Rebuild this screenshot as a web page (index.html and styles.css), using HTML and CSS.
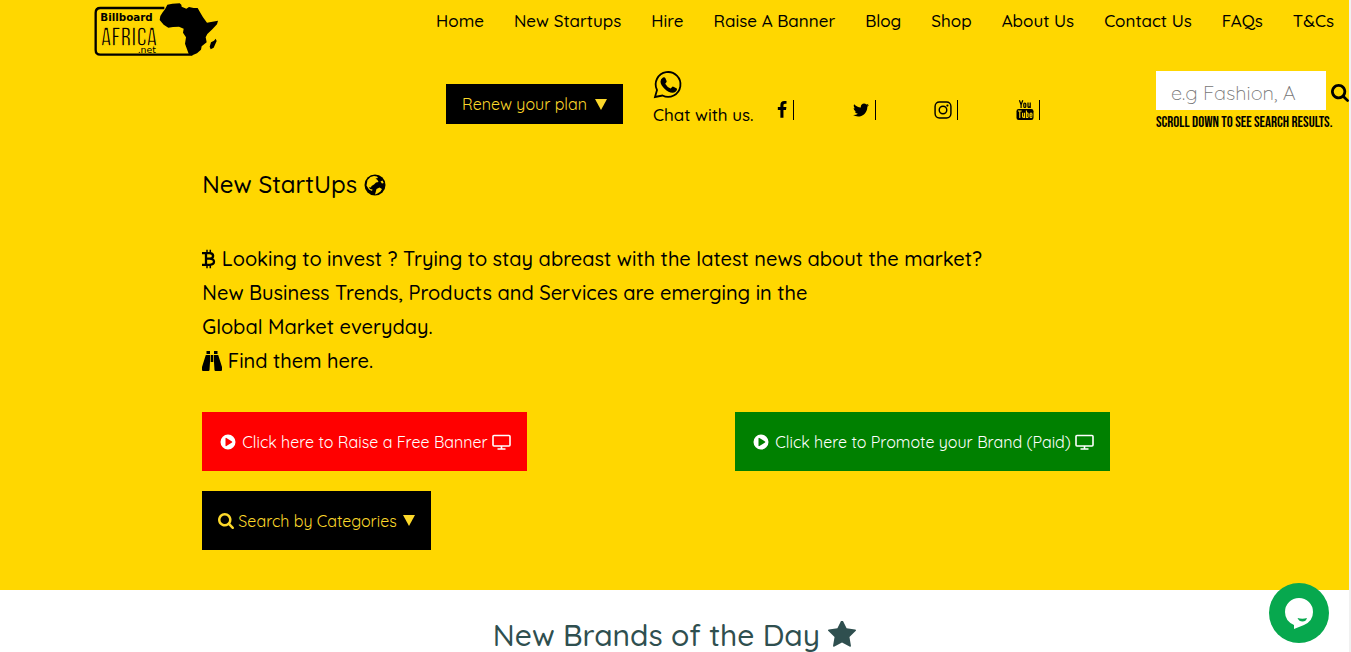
FILE: index.html
```html
<!DOCTYPE html>
<html lang="en">
<head>
<meta charset="utf-8">
<meta name="viewport" content="width=device-width, initial-scale=1">
<title>Billboard Africa - New StartUps</title>
<link rel="stylesheet" href="styles.css">
</head>
<body>
<svg class="sprite" aria-hidden="true">
  <symbol id="i-search" viewBox="64 128 1664 1664"><path d="M1216 832q0-185-131.500-316.500t-316.500-131.500-316.500 131.500-131.500 316.500 131.500 316.500 316.500 131.500 316.500-131.500 131.500-316.500zm512 832q0 52-38 90t-90 38q-54 0-90-38l-343-342q-179 124-399 124-143 0-273.500-55.500t-225-150-150-225-55.500-273.500 55.500-273.500 150-225 225-150 273.500-55.500 273.500 55.500 225 150 150 225 55.500 273.500q0 220-124 399l343 343q37 37 37 90z"/></symbol>
  <symbol id="i-play" viewBox="0 0 16 16"><path fill-rule="evenodd" d="M8 .5a7.500 7.500 0 1 0 0 15 7.500 7.500 0 0 0 0-15zM5.500 4.300v7.400q.1.700.9.400l5.600-3.500q.6-.6 0-1.200L6.400 3.900q-.8-.3-.9.400z"/></symbol>
  <symbol id="i-screen" viewBox="0 0 19 16"><path fill="none" stroke="currentColor" stroke-width="1.600" d="M2 1.500h15a1 1 0 0 1 1 1v8.500a1 1 0 0 1-1 1H2a1 1 0 0 1-1-1V2.500a1 1 0 0 1 1-1zM9.500 12v3M5.500 15h8"/></symbol>
</svg>

<header class="header">
  <a class="logo" href="#" aria-label="Billboard Africa">
    <svg viewBox="24 0 378 174">
      <path fill="none" stroke="#000" stroke-width="7" d="M238 24H46Q32 24 32 38V150Q32 164 46 164H322"/>
      <text class="logo-thin" x="47" y="137" font-size="80">AFRICA</text>
      <text class="logo-bold" x="46" y="62" font-size="31">Billboard</text>
      <text class="logo-net" x="158" y="159" font-size="28">.net</text>
      <path d="M232 38 240 28 247 14 262 11 284 10 289 14 290 20 304 26 312 21 326 24 338 24 346 38 354 52 366 68 378 66 399 62 396 73 382 88 367 102 362 112 365 127 350 139 348 149 336 160 322 166 312 164 306 148 300 131 303 112 294 98 296 86 282 80 264 81 250 83 236 74 224 60 226 48z"/>
      <path d="M392 116 395 123 386 143 377 148 374 140 378 127 387 122z"/>
    </svg>
  </a>
  <div class="header-main">
    <nav class="nav">
      <a href="#">Home</a><a href="#">New Startups</a><a href="#">Hire</a><a href="#">Raise A Banner</a><a href="#">Blog</a><a href="#">Shop</a><a href="#">About Us</a><a href="#">Contact Us</a><a href="#">FAQs</a><a href="#">T&amp;Cs</a>
    </nav>
    <div class="tools">
      <button class="btn plan" type="button">Renew your plan <span class="tri"></span></button>
      <a class="chat" href="#">
        <svg class="whatsapp" viewBox="0 0 30 30"><path fill="none" stroke="#000" stroke-width="1.800" d="M2 27 4 20A12.400 12.400 0 1 1 9.500 25.500z"/><path d="M10 7.500q1.500-.8 2.300.5l1.300 3q.3.800-.4 1.600l-1 1.200q2 3.500 5.400 4.800l1.500-1.700q.5-.6 1.300-.2l3 1.500q.8.400.6 1.400-.7 3-4.500 3.200-4 0-8-4T7.500 11.500q0-2.600 2.500-4z"/></svg>
        <span>Chat with us.</span>
      </a>
      <div class="social">
        <a href="#" aria-label="Facebook"><svg viewBox="-300 0 1792 1792"><path d="M1343 12v264h-157q-86 0-116 36t-30 108v189h293l-39 296h-254v759h-306v-759h-255v-296h255v-218q0-186 104-288.500t277-102.500q147 0 228 12z"/></svg></a>
        <a href="#" aria-label="Twitter"><svg viewBox="0 0 1792 1792"><path d="M1684 408q-67 98-162 167 1 14 1 42 0 130-38 259.500t-115.500 248.500-184.500 210.500-258 146-323 54.500q-271 0-496-145 35 4 78 4 225 0 401-138-105-2-188-64.500t-114-159.500q33 5 61 5 43 0 85-11-112-23-185.500-111.500t-73.500-205.500v-4q68 38 146 41-66-44-105-115t-39-154q0-88 44-163 121 149 294.500 238.500t371.500 99.500q-8-38-8-74 0-134 94.500-228.500t228.500-94.500q140 0 236 102 109-21 205-78-37 115-142 178 93-10 186-50z"/></svg></a>
        <a href="#" aria-label="Instagram"><svg viewBox="0 0 20 20"><g fill="none" stroke="#000" stroke-width="1.600"><rect x="1.200" y="1.200" width="17.600" height="17.600" rx="4.800"/><circle cx="10" cy="10" r="4.200"/></g><circle cx="14.900" cy="5.100" r="1.200"/></svg></a>
        <a href="#" aria-label="YouTube"><svg viewBox="0 0 18 20"><g fill="none" stroke="#000" stroke-width="1.200"><path d="m3.400.3 1.700 4.500V8M6.800.3 5.100 4.800"/><rect x="7.800" y="3" width="2" height="4.500" rx="1"/><path d="M12 2.600v4q.2 1.500 2-.1M14.200 2.600V8"/></g><rect x=".5" y="9" width="17" height="11" rx="2.200"/><g fill="none" stroke="gold" stroke-width="1.100"><path d="M2 11h3.600M3.800 11v7M6.600 12.700v4q.2 1.400 1.700-.1M8.500 12.700V18M10.400 10.500V18M10.400 13.300q1.700-.8 1.700.5v3q0 1.200-1.700.5M16 16.200q0 1.300-1 1.300t-1-1.300v-2q0-1.200 1-1.200t1 1.200v1h-2"/></g></svg></a>
      </div>
      <form class="search">
        <div class="search-row">
          <input type="text" aria-label="Search" placeholder="e.g Fashion, Arts">
          <button type="button" aria-label="Search"><svg><use href="#i-search"/></svg></button>
        </div>
        <p>SCROLL DOWN TO SEE SEARCH RESULTS.</p>
      </form>
    </div>
  </div>
</header>

<main>
  <section class="hero">
    <h1>New StartUps
      <svg viewBox="0 0 22 22"><circle cx="11" cy="11" r="10.500"/><path fill="gold" d="M3.500 6 6.500 3 10 2l3 .5 1 1.500-2.500.5 2 1.500 1 2-2.500.5-2 2-2.500 1.500-.5 1.500-2-.5 1 2 2.500.5-.5 1.500-3-1.500-2.500-4zM12.500 15l3-1.500 2.500 1.500-1.500 2.500-3 2-2.500 1zM16.500 7.500l2-1 1.200 2.500-1.700.5z"/></svg>
    </h1>
    <p class="lead">
      <svg class="coin" viewBox="0 0 14 20"><path fill="none" stroke="#000" stroke-width="2.300" d="M0 4.200h7.500q3.600.2 3.600 2.700T7.500 9.700H4.500M7.500 9.700q4.500.2 4.500 3t-4.500 3.100H0M4 4.200v11.600"/><path fill="none" stroke="#000" stroke-width="1.500" d="M5 .8v3M8.300.8v3M5 16v3.200M8.300 16v3.200"/></svg>
      Looking to invest ? Trying to stay abreast with the latest news about the market?<br>
      New Business Trends, Products and Services are emerging in the<br>
      Global Market everyday.<br>
      <svg class="binoculars" viewBox="0 0 20 20"><path d="M4.500 0H8v3H4.500zM12 0h3.500v3H12zM3.800 4H8v7l-.5 8q0 1-1 1H1q-1 0-1-1v-3zM12 4h4.200L20 16v3q0 1-1 1h-5.500q-1 0-1-1L12 11zM8.700 4h2.600v7H8.700z"/></svg>
      Find them here.
    </p>
    <div class="actions">
      <a class="btn raise" href="#"><svg class="play"><use href="#i-play"/></svg><span>Click here to Raise a Free Banner</span><svg class="screen"><use href="#i-screen"/></svg></a>
      <a class="btn promote" href="#"><svg class="play"><use href="#i-play"/></svg><span>Click here to Promote your Brand (Paid)</span><svg class="screen"><use href="#i-screen"/></svg></a>
      <button class="btn categories" type="button"><svg><use href="#i-search"/></svg><span>Search by Categories</span><span class="tri"></span></button>
    </div>
  </section>
  <section class="brands">
    <h2>New Brands of the Day
      <svg viewBox="64 96 1664 1600"><path d="M1728 647q0 22-26 48l-363 354 86 500q1 7 1 20 0 21-10.500 35.500t-30.500 14.500q-19 0-40-12l-449-236-449 236q-22 12-40 12-21 0-31.500-14.500t-10.500-35.500q0-6 2-20l86-500-364-354q-25-27-25-48 0-37 56-46l502-73 225-455q19-41 49-41t49 41l225 455 502 73q56 9 56 46z"/></svg>
    </h2>
  </section>
</main>
<button class="live-chat" type="button" aria-label="Open chat">
  <svg viewBox="0 0 60 60"><path fill="#fff" d="M30 15a14 14 0 0 1 14 14q0 9-9 13l-10 4v-4q-9-4-9-13a14 14 0 0 1 14-14z"/><path fill="#07a84e" d="M28.500 35q5 1.500 9.500 0-1 3.500-4.500 3.500T28.500 35z"/></svg>
</button>
</body>
</html>
```
FILE: styles.css
```css
* { box-sizing: border-box; }
body {
  margin: 0;
  min-height: 100vh;
  overflow: hidden;
  border-right: 2px solid #f1f1f1;
  background: #fff;
  color: #000;
  font-family: Quicksand, Lato, sans-serif;
}
a { color: inherit; text-decoration: none; }
button { border: 0; font: inherit; cursor: pointer; }
svg { fill: currentColor; }
.sprite { position: absolute; width: 0; height: 0; }

.header { display: flex; justify-content: space-between; background: gold; }
.logo { margin-left: 93px; }
.logo svg { display: block; width: 126px; height: 58px; fill: #000; }
.logo-bold { font-family: "DejaVu Sans", sans-serif; font-weight: 700; }
.logo-thin { font-family: "Bebas Neue", "DejaVu Sans Condensed", sans-serif; stroke: gold; stroke-width: 4; }
.logo-net { font-family: "DejaVu Sans", sans-serif; }
.header-main { width: 913px; }
.nav {
  display: flex;
  justify-content: space-between;
  padding-right: 15px;
  font-size: 17px;
  font-weight: 500;
  line-height: 42px;
}
.tools { display: flex; padding: 28px 0 0 10px; }
.btn { display: inline-flex; align-items: center; padding: 0 16px; font-size: 16px; white-space: nowrap; }
.plan {
  justify-content: space-between;
  width: 177px;
  height: 40px;
  margin-top: 14px;
  background: #000;
  color: #fcd82a;
}
.tri { border: 6px solid transparent; border-top: 11px solid; border-bottom: 0; }
.chat { width: 117px; margin-left: 30px; font-size: 17px; font-weight: 500; line-height: 30px; white-space: nowrap; }
.chat span { display: block; }
.whatsapp { display: block; width: 30px; height: 30px; }
.social { display: flex; margin-top: 30px; }
.social a { display: flex; gap: 5px; width: 82px; height: 20px; }
.social svg { width: 18px; height: 20px; }
.social a::after { content: ""; border-right: 1px solid #000; }
.search { margin: 0 0 0 auto; width: 193px; }
.search-row { display: flex; align-items: center; height: 40px; padding-top: 1px; }
.search input {
  width: 170px;
  height: 39px;
  padding: 4px 30px 0 15px;
  border: 0;
  border-radius: 0;
  font: 300 20px Quicksand, Lato, sans-serif;
}
.search input::placeholder { color: #757575; opacity: 1; }
.search button { padding: 5px 0 0 5px; background: none; }
.search button svg { display: block; width: 18px; height: 18px; }
.search p { margin: 0; font: 15px/26px "Bebas Neue", "Liberation Sans", sans-serif; white-space: nowrap; }

.hero { padding: 31px 15% 40px; background: gold; }
h1 { margin: 0; font-size: 24px; font-weight: 500; line-height: 34px; }
h1 svg { width: 22px; height: 22px; vertical-align: -3px; }
.lead { margin: 41px 0 34px; font-size: 20px; font-weight: 500; line-height: 34px; white-space: nowrap; }
.lead svg { height: 20px; vertical-align: -3px; }
.coin { width: 14px; }
.binoculars { width: 20px; }
.actions { display: grid; grid-template-columns: 533px auto; justify-items: start; justify-content: start; row-gap: 20px; }
.actions .btn { height: 59px; gap: 4px; }
.actions svg { flex: none; width: 16px; height: 16px; }
.raise, .promote { padding-left: 18px; color: #fff; }
.raise { background: red; }
.promote { background: green; }
.actions .play { margin-right: 2px; }
.actions .screen { width: 19px; }
.categories { background: #000; color: #fcd82a; }
.categories .tri { margin-left: 2px; }
.brands { color: #2f4f4f; text-align: center; }
h2 { margin: 0; padding-top: 25px; font-size: 30px; font-weight: 500; line-height: 40px; }
h2 svg { width: 28px; height: 27px; vertical-align: -2px; }
.live-chat {
  position: fixed;
  right: 22px;
  bottom: 9px;
  width: 60px;
  height: 60px;
  padding: 0;
  border-radius: 50%;
  background: #07a84e;
}
.live-chat svg { display: block; }
```
